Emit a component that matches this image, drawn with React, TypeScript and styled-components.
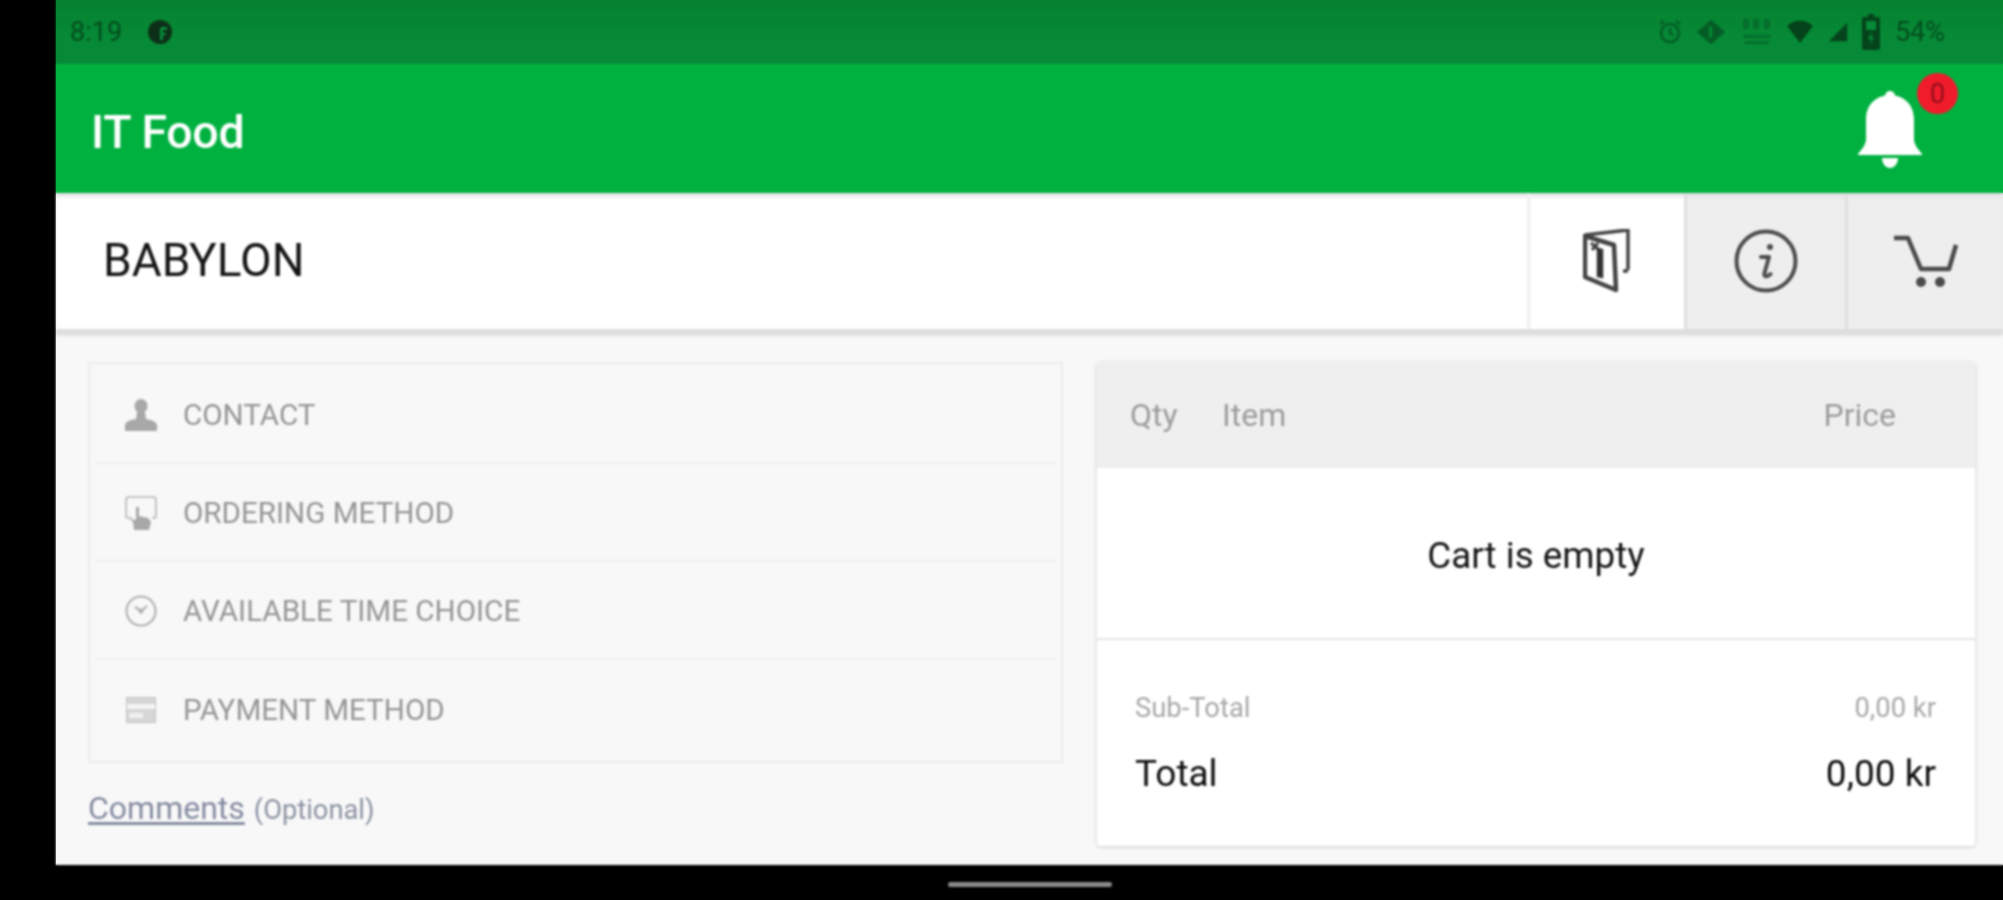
import React from "react";
import styled, { createGlobalStyle } from "styled-components";

const Global = createGlobalStyle`
  html, body { margin: 0; padding: 0; width: 2003px; height: 900px; overflow: hidden; }
  html {
    background:
      linear-gradient(#000, #000) 0 0 / 56px 100% no-repeat,
      linear-gradient(180deg, #06842f 0 64px, #00b140 64px 193px, #eeeeee 193px 335px, #f8f8f8 335px 865px, #000 865px 900px);
  }
  body { font-family: Roboto, "Liberation Sans", sans-serif; }
`;

const Device = styled.div`
  width: 2003px;
  height: 900px;
  background: linear-gradient(#000, #000) 0 865px / 100% 35px no-repeat;
  padding-left: 56px;
  box-sizing: border-box;
  display: flex;
  flex-direction: column;
  align-items: stretch;
  filter: blur(0.9px);
`;
const Screen = styled.div`
  height: 865px;
  display: flex;
  flex-direction: column;
  background: #f8f8f8;
`;
const StatusBar = styled.div`
  height: 64px;
  flex: none;
  background: linear-gradient(180deg, #05812f 0%, #078a37 60%, #078a37 100%);
  display: flex;
  align-items: center;
  justify-content: space-between;
  padding: 0 58px 0 14px;
  color: #034d1d;
  font-size: 27px;
`;
const StatusGroup = styled.div<{ $gap: number }>`
  display: flex;
  align-items: center;
  gap: ${(p) => p.$gap}px;
`;
const AppBar = styled.div`
  height: 129px;
  flex: none;
  background: #00b140;
  display: flex;
  align-items: center;
  justify-content: space-between;
  padding: 0 81px 0 35px;
`;
const Title = styled.div`
  color: #fff;
  font-size: 46.5px;
  font-weight: 500;
  letter-spacing: -0.3px;
  margin-top: 6px;
`;
const BellWrap = styled.div`
  position: relative;
  width: 64px;
  height: 78px;
  margin-top: 1px;
`;
const Badge = styled.div`
  position: absolute;
  left: 59px;
  top: -17px;
  width: 41px;
  height: 41px;
  border-radius: 50%;
  background: #f01b2b;
  color: #8f0f1c;
  font-size: 27px;
  display: flex;
  align-items: center;
  justify-content: center;
`;
const SubBar = styled.div`
  height: 142px;
  flex: none;
  background: #fff;
  display: flex;
  align-items: stretch;
  border-bottom: 6px solid #dedede;
  box-sizing: border-box;
  box-shadow: inset 0 7px 5px -4px #dddddd, 0 2px 3px rgba(0, 0, 0, 0.05);
`;
const Venue = styled.div`
  flex: 1;
  display: flex;
  align-items: center;
  padding: 0 0 2px 47px;
  font-size: 46px;
  color: #141414;
`;
const Tab = styled.div<{ $active?: boolean; $w: number }>`
  width: ${(p) => p.$w}px;
  flex: none;
  box-sizing: border-box;
  display: flex;
  align-items: center;
  justify-content: center;
  background: ${(p) => (p.$active ? "#fff" : "#eeeeee")};
  border-left: 3px solid ${(p) => (p.$active ? "#efefef" : "#e0e0e0")};
  box-shadow: inset 0 7px 5px -4px #dddddd;
`;
const Content = styled.div`
  flex: 1;
  display: grid;
  grid-template-columns: 975px 878px;
  column-gap: 34px;
  padding: 27px 0 19px 32px;
  min-height: 0;
`;
const LeftCol = styled.div`
  display: flex;
  flex-direction: column;
`;
const Steps = styled.div`
  border: 2px solid #ececec;
  height: 401px;
  box-sizing: border-box;
  padding: 2px 5px 0;
`;
const Step = styled.div<{ $last?: boolean }>`
  height: 98px;
  box-sizing: border-box;
  display: flex;
  align-items: center;
  gap: 26px;
  padding: 2px 0 0 30px;
  border-bottom: ${(p) => (p.$last ? "none" : "2px solid #efefef")};
  color: #959595;
  font-size: 29.6px;
`;
const IconBox = styled.div`
  width: 32px;
  height: 34px;
  flex: none;
  display: flex;
  align-items: center;
  justify-content: center;
`;
const CommentRow = styled.div`
  margin-top: 26px;
  display: flex;
  align-items: baseline;
  gap: 9px;
`;
const CommentLink = styled.span`
  color: #858ca2;
  font-size: 32px;
  text-decoration: underline;
  text-underline-offset: 3px;
`;
const Optional = styled.span`
  color: #8b92a2;
  font-size: 27.3px;
`;
const Card = styled.div`
  background: #fff;
  border-radius: 4px;
  box-shadow: 0 1px 4px rgba(0, 0, 0, 0.18);
  display: flex;
  flex-direction: column;
  overflow: hidden;
`;
const CardHead = styled.div`
  height: 106px;
  flex: none;
  background: #efefef;
  display: flex;
  align-items: center;
  padding: 0 79px 0 33px;
  color: #9c9c9c;
  font-size: 32px;
`;
const QtyCol = styled.span`
  width: 92px;
`;
const ItemCol = styled.span`
  flex: 1;
`;
const Empty = styled.div`
  height: 172px;
  flex: none;
  display: flex;
  align-items: center;
  justify-content: center;
  padding-top: 4px;
  box-sizing: border-box;
  border-bottom: 2px solid #e6e6e6;
  color: #141414;
  font-size: 36.8px;
`;
const Totals = styled.div`
  flex: 1;
  padding: 52px 39px 0 38px;
  display: flex;
  flex-direction: column;
  gap: 28px;
`;
const SumRow = styled.div<{ $big?: boolean }>`
  display: flex;
  justify-content: space-between;
  align-items: center;
  color: ${(p) => (p.$big ? "#0d0d0d" : "#a8a8a8")};
  font-size: ${(p) => (p.$big ? 37 : 27.4)}px;
`;
const NavZone = styled.div`
  flex: 1;
  display: flex;
  align-items: center;
  justify-content: center;
  padding-top: 3px;
`;
const HomeBar = styled.div`
  width: 164px;
  height: 5px;
  border-radius: 3px;
  background: #8a8a8a;
`;

const Bell = () => (
  <svg width="64" height="78" viewBox="0 0 64 78" fill="#fff">
    <circle cx="32" cy="6" r="5" />
    <path d="M32 5c-13 0-24 9-24 24v20c0 5-3 9-8 15v1h64v-1c-5-6-8-10-8-15V29C56 14 45 5 32 5z" />
    <path d="M24 68h16c0 6-4 10-8 10s-8-4-8-10z" />
  </svg>
);
const Door = () => (
  <svg width="48" height="64" viewBox="0 0 48 64" fill="none" stroke="#444">
    <path d="M2 7L31 16L33 61L2 48z" fill="#fff" strokeWidth="4.5" strokeLinejoin="round" />
    <path d="M2 6L45 1V41M40 42h5" strokeWidth="3.5" />
    <path d="M8 14l7 6M15 14l-6 7" strokeWidth="3" />
    <path d="M15 20l4 1v27l-4-1z" fill="#333" stroke="#333" strokeWidth="2.5" />
  </svg>
);
const Info = () => (
  <svg width="64" height="64" viewBox="0 0 64 64" fill="none">
    <circle cx="32" cy="32" r="29.5" stroke="#4d4d4d" strokeWidth="4" />
    <circle cx="36" cy="18" r="3" fill="#4d4d4d" />
    <path d="M27 28h8l-4.500 16c-1 4 2 4.500 6 1" stroke="#4d4d4d" strokeWidth="4" strokeLinecap="round" strokeLinejoin="round" />
  </svg>
);
const Cart = () => (
  <svg width="64" height="54" viewBox="0 0 64 54" fill="none" stroke="#4a4a4a" strokeWidth="4.5">
    <path d="M0 4h14l13 31h28l7-24" strokeLinejoin="round" />
    <circle cx="27" cy="48" r="5" fill="#4a4a4a" stroke="none" />
    <circle cx="46" cy="48" r="5" fill="#4a4a4a" stroke="none" />
  </svg>
);
const Person = () => (
  <svg width="32" height="32" viewBox="0 0 32 32" fill="#a8a8a8">
    <ellipse cx="16" cy="7" rx="6.500" ry="7" />
    <path d="M12 13h8l1 7c5 1 10 2 11 6v6H0v-6c1-4 6-5 11-6z" />
  </svg>
);
const Pickup = () => (
  <svg width="32" height="34" viewBox="0 0 32 34" fill="none">
    <path d="M7 22H4c-2 0-3-1-3-3V4c0-2 1-3 3-3h24c2 0 3 1 3 3v15c0 2-1 3-3 3h-1" stroke="#c4c4c4" strokeWidth="2.2" />
    <path d="M11 11h3v9l9 2 3 4-2 8H9l-1-8-3-3 6 1z" fill="#a8a8a8" />
  </svg>
);
const Clock = () => (
  <svg width="32" height="34" viewBox="0 0 32 34" fill="none" stroke="#b2b2b2" strokeWidth="2.200">
    <circle cx="16" cy="17" r="14.500" />
    <path d="M10 13l6 4 6-5" />
    <circle cx="16" cy="17" r="1.500" fill="#b2b2b2" />
  </svg>
);
const CardIcon = () => (
  <svg width="30" height="26" viewBox="0 0 30 26">
    <rect x="0.500" y="0.500" width="29" height="25" fill="#d6d6d6" stroke="#c4c4c4" />
    <rect x="1" y="7" width="28" height="5" fill="#f4f4f4" />
    <rect x="3" y="16" width="14" height="5" fill="#f0f0f0" />
  </svg>
);
const StatusApp = () => (
  <svg width="26" height="26" viewBox="0 0 26 26">
    <circle cx="13" cy="13" r="12" fill="#0c2f18" />
    <path d="M14 8h6v3h-4v3h3v2h-3v5h-3V10z" fill="#078a37" />
  </svg>
);
const StatusIcons = () => (
  <>
    <svg width="24" height="26" viewBox="0 0 24 26" fill="none" stroke="#045c24" strokeWidth="2.500">
      <circle cx="12" cy="14" r="9" />
      <path d="M2 5l4-3M22 5l-4-3M12 9v5l3 2" />
    </svg>
    <svg width="30" height="28" viewBox="0 0 32 28" fill="#045c24">
      <path d="M16 1l15 13-15 13L1 14z" />
      <path d="M14 8h3v12h-3z" fill="#078a37" />
    </svg>
    <svg width="32" height="30" viewBox="0 0 32 30" fill="#04682a" opacity="0.8">
      <path d="M2 2h6v10H2zM12 2h6v10h-6zM23 2h6v10h-6zM2 18h28v3H2zM4 24h24v3H4z" />
    </svg>
    <svg width="26" height="26" viewBox="0 0 26 26" fill="#04431b">
      <path d="M0 7c7-7 19-7 26 0L13 24z" />
    </svg>
    <svg width="20" height="20" viewBox="0 0 24 24" fill="#04431b">
      <path d="M23 1v22H1z" />
    </svg>
    <svg width="18" height="36" viewBox="0 0 18 36" fill="#04431b">
      <path d="M6 0h6v3h4a2 2 0 012 2v29a2 2 0 01-2 2H2a2 2 0 01-2-2V5a2 2 0 012-2h4z" />
      <path d="M4 7h10v9H4z" fill="#078a37" />
      <path d="M10 17l-4 8h3l-1 6 4-8H9z" fill="#078a37" />
    </svg>
    <span>54%</span>
  </>
);

const steps = [
  { label: "CONTACT", icon: <Person /> },
  { label: "ORDERING METHOD", icon: <Pickup /> },
  { label: "AVAILABLE TIME CHOICE", icon: <Clock /> },
  { label: "PAYMENT METHOD", icon: <CardIcon /> },
];

export default function App() {
  return (
    <>
      <Global />
      <Device>
        <Screen>
          <StatusBar>
            <StatusGroup $gap={25}>
              <span>8:19</span>
              <StatusApp />
            </StatusGroup>
            <StatusGroup $gap={14.5}>
              <StatusIcons />
            </StatusGroup>
          </StatusBar>
          <AppBar>
            <Title>IT Food</Title>
            <BellWrap>
              <Bell />
              <Badge>0</Badge>
            </BellWrap>
          </AppBar>
          <SubBar>
            <Venue>BABYLON</Venue>
            <Tab $active $w={157}><Door /></Tab>
            <Tab $w={161}><Info /></Tab>
            <Tab $w={158}><Cart /></Tab>
          </SubBar>
          <Content>
            <LeftCol>
              <Steps>
                {steps.map((s, i) => (
                  <Step key={s.label} $last={i === steps.length - 1}>
                    <IconBox>{s.icon}</IconBox>
                    <span>{s.label}</span>
                  </Step>
                ))}
              </Steps>
              <CommentRow>
                <CommentLink>Comments</CommentLink>
                <Optional>(Optional)</Optional>
              </CommentRow>
            </LeftCol>
            <Card>
              <CardHead>
                <QtyCol>Qty</QtyCol>
                <ItemCol>Item</ItemCol>
                <span>Price</span>
              </CardHead>
              <Empty>Cart is empty</Empty>
              <Totals>
                <SumRow>
                  <span>Sub-Total</span>
                  <span>0,00 kr</span>
                </SumRow>
                <SumRow $big>
                  <span>Total</span>
                  <span>0,00 kr</span>
                </SumRow>
              </Totals>
            </Card>
          </Content>
        </Screen>
        <NavZone>
          <HomeBar />
        </NavZone>
      </Device>
    </>
  );
}
